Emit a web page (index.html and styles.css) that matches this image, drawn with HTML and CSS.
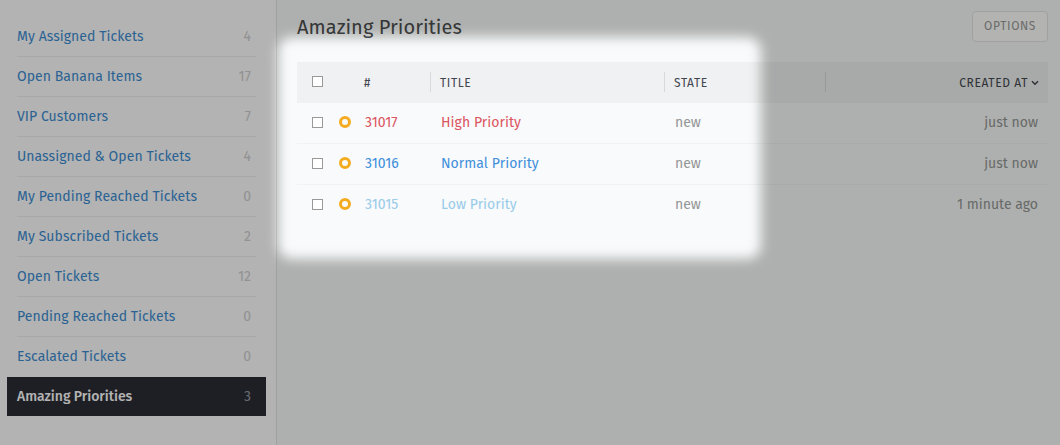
FILE: index.html
```html
<!DOCTYPE html>
<html lang="en">
<head>
<meta charset="utf-8">
<title>Amazing Priorities</title>
<link rel="stylesheet" href="styles.css">
</head>
<body>
<div class="app">
  <nav class="sidebar">
    <a class="item"><span class="label">My Assigned Tickets</span><span class="count">4</span></a>
    <a class="item"><span class="label">Open Banana Items</span><span class="count">17</span></a>
    <a class="item"><span class="label">VIP Customers</span><span class="count">7</span></a>
    <a class="item"><span class="label">Unassigned &amp; Open Tickets</span><span class="count">4</span></a>
    <a class="item"><span class="label">My Pending Reached Tickets</span><span class="count">0</span></a>
    <a class="item"><span class="label">My Subscribed Tickets</span><span class="count">2</span></a>
    <a class="item"><span class="label">Open Tickets</span><span class="count">12</span></a>
    <a class="item"><span class="label">Pending Reached Tickets</span><span class="count">0</span></a>
    <a class="item last"><span class="label">Escalated Tickets</span><span class="count">0</span></a>
    <a class="item active"><span class="label">Amazing Priorities</span><span class="count">3</span></a>
  </nav>
  <main class="main">
    <header class="top">
      <h1 class="title">Amazing Priorities</h1>
      <button class="options">OPTIONS</button>
    </header>
    <div class="table">
      <div class="row head">
        <span class="box"></span><span></span><span class="hash">#</span>
        <span class="th">TITLE</span><span class="th">STATE</span><span class="th"></span>
        <span class="created">CREATED AT<svg class="caret" width="8" height="6" viewBox="0 0 8 6"><path d="M1 1.2 4 4.2 7 1.2" fill="none" stroke="currentColor" stroke-width="1.5"/></svg></span>
      </div>
      <div class="row high">
        <span class="box"></span><span class="ring"></span><span class="num">31017</span>
        <span class="name">High Priority</span><span class="state">new</span><span></span><span class="time">just now</span>
      </div>
      <div class="row normal">
        <span class="box"></span><span class="ring"></span><span class="num">31016</span>
        <span class="name">Normal Priority</span><span class="state">new</span><span></span><span class="time">just now</span>
      </div>
      <div class="row low">
        <span class="box"></span><span class="ring"></span><span class="num">31015</span>
        <span class="name">Low Priority</span><span class="state">new</span><span></span><span class="time">1 minute ago</span>
      </div>
    </div>
  </main>
  <svg class="spotlight" width="1060" height="445" viewBox="0 0 1060 445">
    <defs>
      <filter id="soft" x="-10%" y="-20%" width="120%" height="140%" color-interpolation-filters="sRGB"><feGaussianBlur stdDeviation="6"/></filter>
      <mask id="hole" maskUnits="userSpaceOnUse" x="0" y="0" width="1060" height="445">
        <rect width="1060" height="445" fill="#fff"/>
        <rect x="278" y="37" width="483" height="222" rx="14" fill="#000" filter="url(#soft)"/>
      </mask>
    </defs>
    <g mask="url(#hole)">
      <rect width="277" height="445" fill="#000" fill-opacity=".298"/>
      <rect x="277" width="783" height="445" fill="#020500" fill-opacity=".3"/>
    </g>
  </svg>
</div>
</body>
</html>
```
FILE: styles.css
```css
* { box-sizing: border-box; }
body {
  margin: 0;
  font-family: "Fira Sans", "Open Sans", "Noto Sans", sans-serif;
  font-size: 14px;
}
.app { position: relative; display: flex; width: 1060px; height: 445px; overflow: hidden; }
.sidebar {
  width: 277px;
  padding: 17px 10px 0 7px;
  background: #fff;
  border-right: 1px solid #e3e5e6;
}
.item {
  display: flex;
  justify-content: space-between;
  height: 40px;
  margin: 0 10px;
  line-height: 40px;
  letter-spacing: .05px;
  color: #3d8dd2;
  border-bottom: 1px solid #f0f0f0;
}
.item.last { border-color: transparent; }
.item.active {
  height: 39px;
  margin: 0;
  padding: 0 15px 0 10px;
  color: #fff;
  background: #2c2d36;
  border: 0;
}
.active .label { font-weight: 500; letter-spacing: -.03px; }
.count { color: #cfcfcf; }
.item:not(.active) .count { margin-right: 5px; }
.active .count { color: #9698a0; }
.main { flex: 1; padding: 0 12px 0 20px; background: #f8fafb; }
.top { display: flex; justify-content: space-between; height: 62px; }
.title { margin: 8px 0 0; font-size: 20px; font-weight: 400; line-height: 38px; letter-spacing: .05px; color: #4a4b4d; }
.options {
  width: 76px;
  height: 31px;
  margin-top: 11px;
  padding: 0 0 2px;
  font: inherit;
  font-size: 12px;
  letter-spacing: .6px;
  color: #989898;
  background: #fff;
  border: 1px solid #e2e3e4;
  border-radius: 4px;
}
.row {
  display: grid;
  grid-template-columns: 27px 26px 65px 234px 161px 70px 1fr;
  align-items: center;
  height: 41px;
  padding: 0 10px 2px 15px;
  border-bottom: 1px solid #f0f2f3;
}
.row:last-child { border-color: transparent; }
.head { background: #f0f1f2; border: 0; font-size: 12px; letter-spacing: .6px; color: #42454f; }
.box { width: 11px; height: 11px; border: 1px solid #999; background: #fff; }
.ring { width: 12px; height: 12px; border: 3px solid #f5ab20; border-radius: 50%; }
.hash { margin-left: -1px; padding-top: 2px; }
.th { height: 20px; padding-left: 9px; line-height: 22px; border-left: 1px solid #d7d9da; }
.created { margin-right: -1px; padding-top: 2px; text-align: right; white-space: nowrap; }
.caret { margin-left: 3px; vertical-align: 1px; }
.name, .state { padding-left: 11px; }
.name { letter-spacing: .05px; }
.state, .time { color: #949596; }
.time { text-align: right; }
.high .num, .high .name { color: #dc5560; }
.normal .num, .normal .name { color: #3f8fdb; }
.low .num, .low .name { color: #99cbea; }
.spotlight { position: absolute; inset: 0; pointer-events: none; }
```
